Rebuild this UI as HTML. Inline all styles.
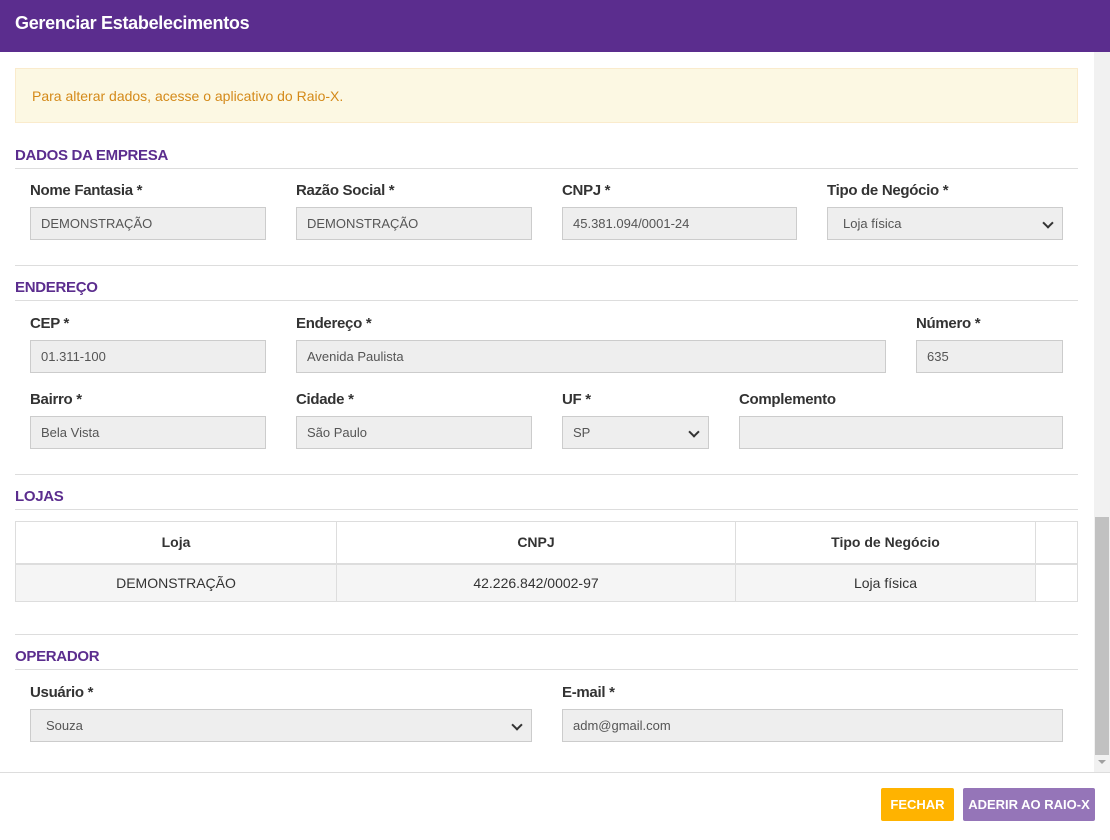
<!DOCTYPE html>
<html><head><meta charset="utf-8"><style>
*{box-sizing:border-box;margin:0;padding:0}
body{width:1110px;height:840px;background:#fff;font-family:"Liberation Sans",sans-serif;position:relative;overflow:hidden;color:#333}
.a{position:absolute}
.hdr{left:0;top:0;width:1110px;height:52px;background:#5b2d8e;color:#fff;font-size:18px;font-weight:bold;padding:13px 15px;letter-spacing:-0.3px}
.alert{left:15px;top:68px;width:1063px;height:55px;background:#fcf8e3;border:1px solid #faebcc;color:#d48a1a;font-size:14px;padding:19px 16px}
.sec{left:15px;width:1063px;border-bottom:1px solid #ddd;color:#5b2d8e;font-size:15px;font-weight:bold;height:22px;letter-spacing:-0.3px}
.hr{left:15px;width:1063px;height:1px;background:#ddd}
.lbl{font-size:15px;font-weight:bold;color:#333;letter-spacing:-0.3px}
.in{height:33px;background:#eee;border:1px solid #ccc;font-size:13px;color:#555;padding:8px 10px;white-space:nowrap}
.sel:after{content:"";position:absolute;right:10px;top:11px;width:6px;height:6px;border-right:2px solid #333;border-bottom:2px solid #333;transform:rotate(45deg)}
table{border-collapse:collapse;font-size:14px}
td,th{border:1px solid #ddd;text-align:center}
.btn{height:33px;color:#fff;font-size:13px;font-weight:bold;text-align:center;line-height:33px;border-radius:2px}
</style></head><body>
<div class="a hdr">Gerenciar Estabelecimentos</div>
<div class="a alert">Para alterar dados, acesse o aplicativo do Raio-X.</div>

<div class="a sec" style="top:147px">DADOS DA EMPRESA</div>
<div class="a lbl" style="left:30px;top:182px">Nome Fantasia *</div>
<div class="a lbl" style="left:296px;top:182px">Razão Social *</div>
<div class="a lbl" style="left:562px;top:182px">CNPJ *</div>
<div class="a lbl" style="left:827px;top:182px">Tipo de Negócio *</div>
<div class="a in" style="left:30px;top:207px;width:236px">DEMONSTRAÇÃO</div>
<div class="a in" style="left:296px;top:207px;width:236px">DEMONSTRAÇÃO</div>
<div class="a in" style="left:562px;top:207px;width:235px">45.381.094/0001-24</div>
<div class="a in sel" style="left:827px;top:207px;width:236px;padding-left:15px">Loja física</div>

<div class="a hr" style="top:265px"></div>
<div class="a sec" style="top:279px">ENDEREÇO</div>
<div class="a lbl" style="left:30px;top:315px">CEP *</div>
<div class="a lbl" style="left:296px;top:315px">Endereço *</div>
<div class="a lbl" style="left:916px;top:315px">Número *</div>
<div class="a in" style="left:30px;top:340px;width:236px">01.311-100</div>
<div class="a in" style="left:296px;top:340px;width:590px">Avenida Paulista</div>
<div class="a in" style="left:916px;top:340px;width:147px">635</div>
<div class="a lbl" style="left:30px;top:391px">Bairro *</div>
<div class="a lbl" style="left:296px;top:391px">Cidade *</div>
<div class="a lbl" style="left:562px;top:391px">UF *</div>
<div class="a lbl" style="left:739px;top:391px">Complemento</div>
<div class="a in" style="left:30px;top:416px;width:236px">Bela Vista</div>
<div class="a in" style="left:296px;top:416px;width:236px">São Paulo</div>
<div class="a in sel" style="left:562px;top:416px;width:147px">SP</div>
<div class="a in" style="left:739px;top:416px;width:324px"></div>

<div class="a hr" style="top:474px"></div>
<div class="a sec" style="top:488px">LOJAS</div>
<table class="a" style="left:15px;top:521px;width:1063px">
<tr style="height:42px;border-bottom:2px solid #ddd"><th style="width:321px">Loja</th><th style="width:399px">CNPJ</th><th style="width:300px">Tipo de Negócio</th><th></th></tr>
<tr style="height:38px;background:#f5f5f5"><td>DEMONSTRAÇÃO</td><td>42.226.842/0002-97</td><td>Loja física</td><td style="background:#fff"></td></tr>
</table>

<div class="a hr" style="top:634px"></div>
<div class="a sec" style="top:648px">OPERADOR</div>
<div class="a lbl" style="left:30px;top:684px">Usuário *</div>
<div class="a lbl" style="left:562px;top:684px">E-mail *</div>
<div class="a in sel" style="left:30px;top:709px;width:502px;padding-left:15px">Souza</div>
<div class="a in" style="left:562px;top:709px;width:501px">adm@gmail.com</div>

<div class="a" style="left:1094px;top:52px;width:16px;height:720px;background:#f1f1f1"></div>
<div class="a" style="left:1095px;top:517px;width:14px;height:238px;background:#c1c1c1"></div>
<div class="a" style="left:1098px;top:760px;width:0;height:0;border-left:4px solid transparent;border-right:4px solid transparent;border-top:4px solid #a0a0a0"></div>
<div class="a hr" style="left:0;width:1110px;top:772px"></div>

<div class="a btn" style="left:881px;top:788px;width:73px;background:#ffb300">FECHAR</div>
<div class="a btn" style="left:963px;top:788px;width:132px;background:#9575b8">ADERIR AO RAIO-X</div>
</body></html>
